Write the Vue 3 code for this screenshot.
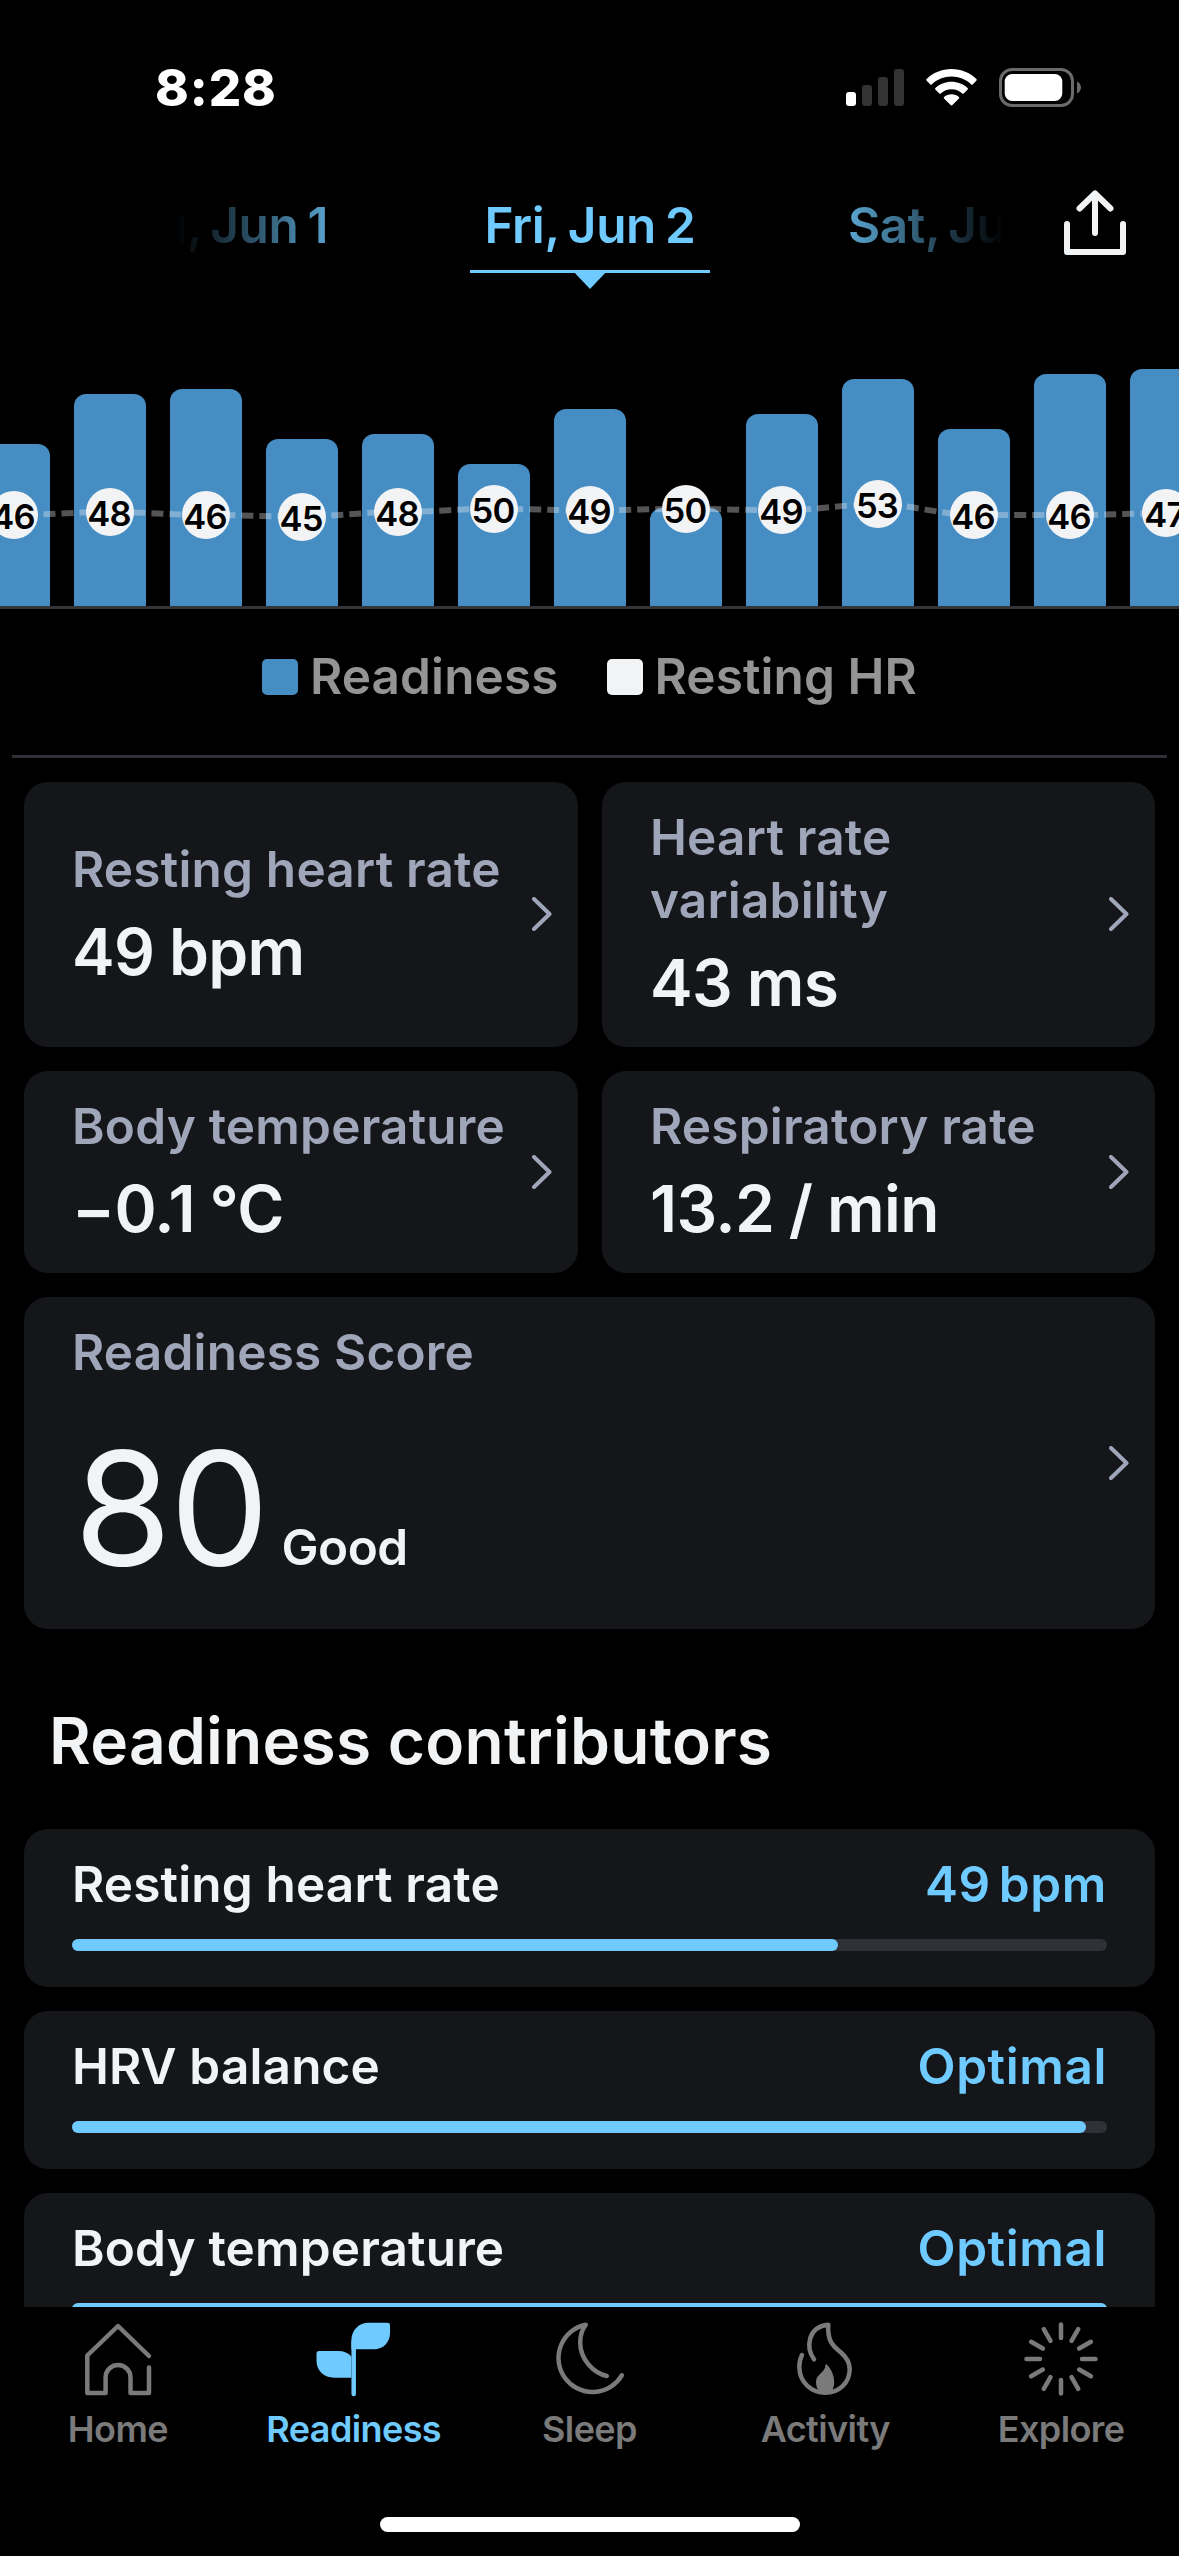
<template>
  <div class="screen">
    <div class="status-bar">
      <span class="status-time">8:28</span>
      <div class="status-icons">
        <svg class="signal" viewBox="0 0 58 37">
          <rect x="0" y="23" width="10" height="14" rx="3" fill="#fff" />
          <rect x="16" y="16" width="10" height="21" rx="3" fill="#333" />
          <rect x="32" y="8" width="10" height="29" rx="3" fill="#333" />
          <rect x="48" y="0" width="10" height="37" rx="3" fill="#333" />
        </svg>
        <svg class="wifi" viewBox="0 0 51 37" fill="#fff">
          <path d="M25.5 0C35.2 0 44 3.8 50.4 10C50.9 10.500 50.9 11 50.500 11.500L46.600 15.400C46.200 15.800 45.700 15.800 45.200 15.400C40 10.500 33 7.600 25.500 7.600S11 10.500 5.800 15.400C5.300 15.800 4.800 15.800 4.400 15.400L.5 11.500C.1 11 .1 10.500 .6 10C7 3.800 15.800 0 25.500 0Z" />
          <path d="M25.5 12.700C31.700 12.700 37.300 15 41.600 18.900C42.100 19.400 42.100 19.900 41.700 20.400L37.700 24.400C37.300 24.800 36.800 24.800 36.300 24.400C33.400 21.900 29.600 20.300 25.500 20.300S17.600 21.900 14.700 24.400C14.200 24.800 13.700 24.800 13.300 24.400L9.300 20.400C8.900 19.900 8.900 19.400 9.400 18.900C13.700 15 19.300 12.700 25.500 12.700Z" />
          <path d="M25.5 25.300C28.300 25.300 30.900 26.300 32.900 28C33.400 28.400 33.400 28.900 33 29.400L26.400 36.100C25.800 36.700 25.200 36.700 24.600 36.100L18 29.400C17.600 28.900 17.600 28.400 18.100 28C20.100 26.300 22.700 25.300 25.500 25.300Z" />
        </svg>
        <svg class="battery" viewBox="0 0 82 39">
          <rect x="1.500" y="1.500" width="72" height="36" rx="11.500" fill="none" stroke="#6a6a6a" stroke-width="3" />
          <rect x="5.700" y="6" width="57.600" height="27" rx="7.500" fill="#fff" />
          <path d="M78 13.500C80.500 14.500 82 17 82 19.500S80.500 24.500 78 25.500Z" fill="#6a6a6a" />
        </svg>
      </div>
    </div>

    <header class="header">
      <div class="dates">
        <span class="date date-prev">Thu, Jun 1</span>
        <span class="date date-current">Fri, Jun 2</span>
        <span class="date date-next">Sat, Jun 3</span>
      </div>
      <svg class="share" viewBox="0 0 62 65">
        <path d="M3 34V62H59V34M31 43V4M15.500 18.500L31 3.500L46.500 18.500" />
      </svg>
    </header>

    <section class="chart">
      <div v-for="(day, index) in days" :key="index" class="bar" :style="{ height: day.bar + 'px' }"></div>
      <svg class="trend" viewBox="0 0 1179 316">
        <path :d="trendPath" />
      </svg>
      <div class="markers">
        <div v-for="(day, index) in days" :key="index" class="marker-slot">
          <span class="marker" :style="{ marginTop: markerY(day.hr) - 24 + 'px' }">{{ day.hr }}</span>
        </div>
      </div>
    </section>

    <div class="legend">
      <div class="legend-item"><i class="swatch swatch-blue"></i>Readiness</div>
      <div class="legend-item"><i class="swatch swatch-white"></i>Resting HR</div>
    </div>

    <section class="cards">
      <div v-for="card in cards" :key="card.label" class="card">
        <div class="card-body">
          <div class="card-label">{{ card.label }}</div>
          <div class="card-value">{{ card.value }}</div>
        </div>
        <svg class="chevron" viewBox="0 0 20 34"><path d="M2 2L17.500 17L2 32" /></svg>
      </div>
      <div class="card card-wide">
        <div class="card-body">
          <div class="card-label">Readiness Score</div>
          <div class="score">
            <span class="score-number">80</span>
            <span class="score-text">Good</span>
          </div>
        </div>
        <svg class="chevron" viewBox="0 0 20 34"><path d="M2 2L17.500 17L2 32" /></svg>
      </div>
    </section>

    <h2 class="title">Readiness contributors</h2>

    <section class="contributors">
      <div v-for="item in contributors" :key="item.label" class="contributor">
        <div class="contributor-row">
          <span>{{ item.label }}</span>
          <span class="contributor-value">{{ item.value }}</span>
        </div>
        <div class="track">
          <div class="fill" :style="{ width: item.percent + '%' }"></div>
        </div>
      </div>
    </section>

    <nav class="tab-bar">
      <div class="tab">
        <svg class="tab-icon" viewBox="0 0 80 80">
          <path d="M71 39L40 9L9.300 38.500V76H27.600V60.500A12.450 12.450 0 0 1 52.500 60.500V76H71V50.500" />
        </svg>
        <span>Home</span>
      </div>
      <div class="tab active">
        <svg class="tab-icon" viewBox="0 0 80 80">
          <path class="solid" d="M37.400 32.300V23C37.400 13 45 5.700 54.500 5.700H73.500Q76 5.700 76 8V16C76 25.500 69 32.300 60 32.300Z" />
          <path class="solid" d="M37.400 60.700H20C10 60.700 2.500 53.500 2.500 44V36.500Q2.500 34 5 34H24C30 34 34.500 36 37.400 39.500Z" />
          <path d="M39.700 25V77" />
        </svg>
        <span>Readiness</span>
      </div>
      <div class="tab">
        <svg class="tab-icon" viewBox="0 0 80 80">
          <path d="M57.800 59C45 56 31.200 43 31.200 25.500C31.200 19 33.500 12 36.800 7.700A34 34 0 1 0 72.800 58.300" />
        </svg>
        <span>Sleep</span>
      </div>
      <div class="tab">
        <svg class="tab-icon" viewBox="0 0 80 80">
          <path d="M29 42.300C21 31 22 10 43.300 7.800C42 27 51 31 56 35.500C61 40 64.700 45 64.700 52C64.700 66 54 75.700 40.300 75.700C27 75.700 14.500 66 14.300 50C14.300 45.500 15.200 41.500 17 38" />
          <path class="solid" d="M41.600 47.300C46 52 49.200 58 49.200 65C49.200 69 48 72.500 46.500 75H35C32 72 31 69 31 65C31 57 40 56 40.500 48Q41 46.800 41.600 47.300Z" />
        </svg>
        <span>Activity</span>
      </div>
      <div class="tab">
        <svg class="tab-icon" viewBox="0 0 80 80">
          <path v-for="n in 12" :key="n" d="M40 7.500V21" :transform="`rotate(${n * 30} 40 42)`" />
        </svg>
        <span>Explore</span>
      </div>
      <div class="home-indicator"></div>
    </nav>
  </div>
</template>

<script setup>
import { computed } from 'vue';

const days = [
  { bar: 162, hr: 46 },
  { bar: 212, hr: 48 },
  { bar: 217, hr: 46 },
  { bar: 167, hr: 45 },
  { bar: 172, hr: 48 },
  { bar: 142, hr: 50 },
  { bar: 197, hr: 49 },
  { bar: 98, hr: 50 },
  { bar: 192, hr: 49 },
  { bar: 227, hr: 53 },
  { bar: 177, hr: 46 },
  { bar: 232, hr: 46 },
  { bar: 237, hr: 47 }
];

const cards = [
  { label: 'Resting heart rate', value: '49 bpm' },
  { label: 'Heart rate variability', value: '43 ms' },
  { label: 'Body temperature', value: '−0.1 °C' },
  { label: 'Respiratory rate', value: '13.2 / min' }
];

const contributors = [
  { label: 'Resting heart rate', value: '49 bpm', percent: 74 },
  { label: 'HRV balance', value: 'Optimal', percent: 98 },
  { label: 'Body temperature', value: 'Optimal', percent: 100 }
];

const markerY = (hr) => 225 - (hr - 46) * 1.55;

// one extra point on each side so the line runs off the screen
const trendPath = computed(() => {
  const values = [46, ...days.map(day => day.hr), 47];
  const points = values.map((hr, i) => ({ x: 13.5 + (i - 1) * 96, y: markerY(hr) }));
  return points.reduce((path, p, i) => {
    if (i === 0) return `M${p.x} ${p.y}`;
    const prev = points[i - 1];
    return `${path}C${prev.x + 32} ${prev.y} ${p.x - 32} ${p.y} ${p.x} ${p.y}`;
  }, '');
});
</script>

<style>
html,
body {
  margin: 0;
  background: #000;
}
</style>

<style scoped>
.screen {
  display: flex;
  flex-direction: column;
  width: 1179px;
  height: 2556px;
  overflow: hidden;
  background: #000;
  color: #f2f3f5;
  font-family: Inter, "Liberation Sans", sans-serif;
  font-size: 49.5px;
  font-weight: 600;
  line-height: 63px;
}

.screen > * {
  flex-shrink: 0;
}

.status-bar {
  display: flex;
  align-items: center;
  justify-content: space-between;
  box-sizing: border-box;
  height: 175px;
  padding: 0 98px 0 155px;
}

.status-time {
  color: #fff;
  font-size: 51px;
  font-weight: 800;
  letter-spacing: 0.9px;
}

.status-icons {
  display: flex;
  align-items: center;
  gap: 22px;
}

.signal {
  width: 58px;
  height: 37px;
}

.wifi {
  width: 51px;
  height: 37px;
}

.battery {
  width: 82px;
  height: 39px;
}

.header {
  display: flex;
  height: 115px;
  padding-left: 176px;
}

.dates {
  display: grid;
  grid-template-columns: 294px 240px 294px;
  width: 828px;
  height: 115px;
  overflow: hidden;
  color: #6ecaff;
  letter-spacing: -0.4px;
  white-space: nowrap;
  word-spacing: -3px;
  -webkit-mask-image: linear-gradient(to right, transparent, #000 23%, #000 77%, transparent);
  mask-image: linear-gradient(to right, transparent, #000 23%, #000 77%, transparent);
}

.date {
  display: flex;
  box-sizing: border-box;
  height: 98px;
  padding-top: 19px;
}

.date-prev {
  justify-content: flex-end;
  padding-right: 142px;
}

.date-current {
  position: relative;
  justify-content: center;
  border-bottom: 3px solid #6ecaff;
}

.date-current::after {
  content: "";
  position: absolute;
  top: 100%;
  left: 102px;
  border: 18px solid transparent;
  border-top: 19px solid #6ecaff;
  border-bottom: 0;
}

.date-next {
  padding-left: 138px;
}

.share {
  width: 62px;
  height: 65px;
  margin: 15px 0 0 60px;
  fill: none;
  stroke: #f2f3f5;
  stroke-width: 6;
  stroke-linecap: round;
  stroke-linejoin: round;
}

.chart {
  position: relative;
  display: flex;
  align-items: flex-end;
  justify-content: center;
  gap: 24px;
  height: 316px;
  border-bottom: 3px solid #35363a;
}

.bar {
  flex: none;
  width: 72px;
  border-radius: 12px 12px 0 0;
  background: #458dc2;
}

.trend {
  position: absolute;
  top: 0;
  left: 0;
  width: 1179px;
  height: 316px;
  fill: none;
  stroke: rgba(240, 242, 245, 0.35);
  stroke-width: 6;
  stroke-dasharray: 12 6;
}

.markers {
  position: absolute;
  inset: 0;
  display: flex;
  justify-content: center;
  gap: 24px;
}

.marker-slot {
  display: flex;
  flex: none;
  justify-content: center;
  width: 72px;
}

.marker {
  width: 48px;
  height: 48px;
  border-radius: 50%;
  background: #f2f3f5;
  color: #000;
  font-size: 34.5px;
  letter-spacing: -0.8px;
  line-height: 52px;
  text-align: center;
  text-indent: -1px;
}

.legend {
  display: flex;
  justify-content: center;
  gap: 48px;
  margin: 0 12px;
  padding: 36px 0 47px;
  border-bottom: 3px solid #303136;
  color: #949494;
  letter-spacing: 0.1px;
}

.legend-item {
  display: flex;
  align-items: center;
  gap: 12px;
}

.swatch {
  width: 36px;
  height: 36px;
  border-radius: 5px;
}

.swatch-blue {
  background: #458dc2;
}

.swatch-white {
  background: #f2f3f5;
}

.cards {
  display: grid;
  grid-template-columns: 554px 553px;
  gap: 24px;
  margin: 24px 24px 0;
}

.card {
  display: flex;
  align-items: center;
  justify-content: space-between;
  box-sizing: border-box;
  padding: 24px 26px 25px 48px;
  border-radius: 24px;
  background: #15161a;
}

.card-wide {
  grid-column: span 2;
  height: 332px;
}

.card-label {
  max-width: 440px;
  color: #a0a6ba;
  letter-spacing: 0.2px;
}

.card-value {
  margin-top: 12px;
  font-size: 64px;
  letter-spacing: -0.6px;
  line-height: 78px;
  word-spacing: -1px;
}

.chevron {
  flex: none;
  width: 20px;
  height: 34px;
  fill: none;
  stroke: #a0a6ba;
  stroke-width: 4;
  stroke-linecap: round;
  stroke-linejoin: round;
}

.score {
  display: flex;
  align-items: baseline;
  gap: 14px;
  height: 220px;
  padding-left: 2px;
}

.score-number {
  font-size: 158px;
  font-weight: 400;
  letter-spacing: -2px;
  line-height: 247px;
}

.score-text {
  letter-spacing: -0.5px;
}

.title {
  margin: 72px 0 49px 49px;
  font-size: 64px;
  font-weight: 600;
  letter-spacing: 0.25px;
  line-height: 79px;
}

.contributors {
  display: flex;
  flex-direction: column;
  gap: 24px;
  height: 478px;
  margin: 0 24px;
  overflow: hidden;
}

.contributor {
  flex: none;
  box-sizing: border-box;
  height: 158px;
  padding: 24px 48px 0;
  border-radius: 24px;
  background: #15161a;
}

.contributor-row {
  display: flex;
  justify-content: space-between;
  letter-spacing: 0.15px;
}

.contributor-value {
  color: #6ecaff;
  letter-spacing: 0.6px;
  word-spacing: -5px;
}

.track {
  height: 12px;
  margin-top: 23px;
  border-radius: 6px;
  background: #303136;
}

.fill {
  height: 12px;
  border-radius: 6px;
  background: #6ecaff;
}

.tab-bar {
  display: flex;
  flex-wrap: wrap;
  align-content: flex-start;
  justify-content: center;
  padding-top: 10px;
  color: #7a7a7a;
}

.tab {
  display: flex;
  flex-direction: column;
  align-items: center;
  gap: 10px;
  width: 20%;
  font-size: 36px;
  letter-spacing: -0.6px;
  line-height: 44px;
}

.tab.active {
  color: #6ecaff;
}

.tab-icon {
  width: 80px;
  height: 80px;
  fill: none;
  stroke: currentColor;
  stroke-width: 4.5;
  stroke-linecap: round;
  stroke-linejoin: round;
}

.tab-icon .solid {
  fill: currentColor;
  stroke: none;
}

.home-indicator {
  width: 420px;
  height: 15px;
  margin-top: 66px;
  border-radius: 8px;
  background: #fff;
}
</style>
